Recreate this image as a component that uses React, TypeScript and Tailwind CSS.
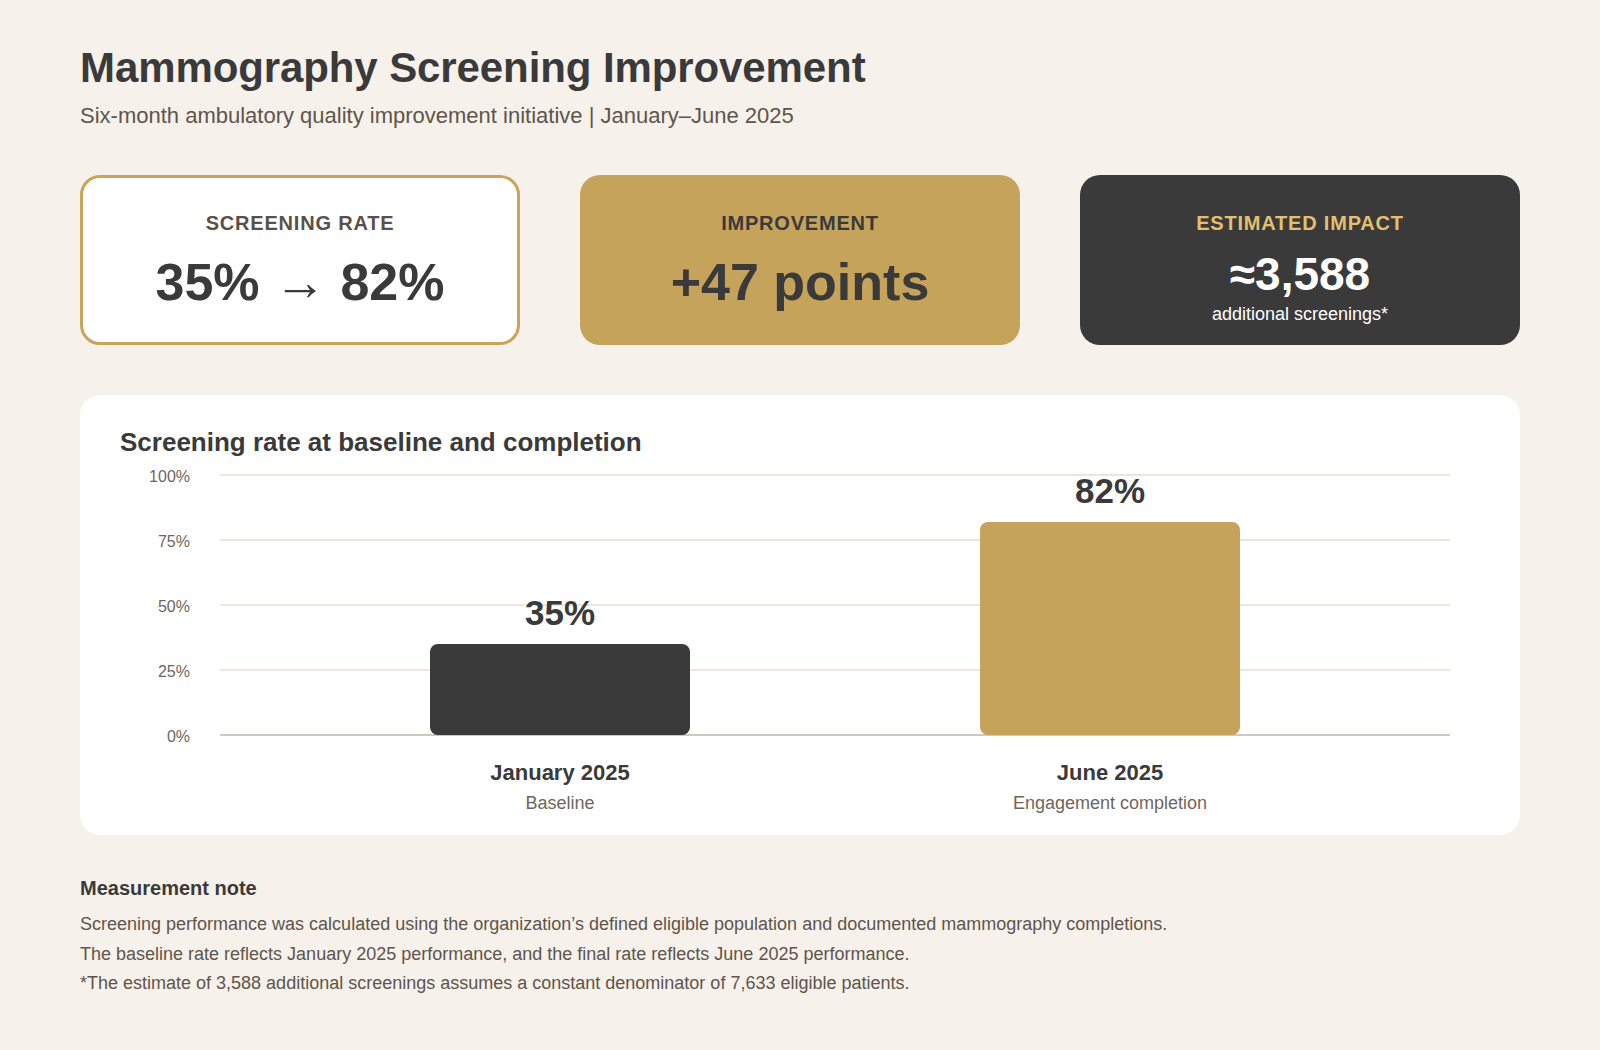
import React from "react";

const bars = [
  { value: 35, label: "January 2025", sub: "Baseline", color: "bg-[#3a3a3a]" },
  { value: 82, label: "June 2025", sub: "Engagement completion", color: "bg-[#c6a35a]" },
];

export default function App() {
  return (
    <div className="min-h-[1050px] w-full bg-[#f6f1ea] font-['Liberation_Sans',Arial,sans-serif] text-[#3a3a3a]">
      <div className="px-[80px] pt-[43px]">
        <h1 className="text-[42px] leading-[50px] font-bold tracking-[-0.1px] text-[#3a3a3a]">
          Mammography Screening Improvement
        </h1>
        <p className="mt-[8px] text-[22px] leading-[30px] text-[#5e554c]">
          Six-month ambulatory quality improvement initiative | January–June 2025
        </p>

        <div className="mt-[44px] flex gap-[60px]">
          <div className="flex h-[170px] w-[440px] flex-col items-center rounded-[20px] border-[3px] border-[#c9a55a] bg-white pt-[33px]">
            <div className="text-[20px] leading-[24px] font-bold tracking-[0.8px] text-[#5a5048]">SCREENING RATE</div>
            <div className="mt-[21px] text-[52px] leading-[52px] font-bold text-[#3a3a3a]">35% → 82%</div>
          </div>
          <div className="flex h-[170px] w-[440px] flex-col items-center rounded-[20px] bg-[#c6a35a] pt-[36px]">
            <div className="text-[20px] leading-[24px] font-bold tracking-[0.8px] text-[#3a3a3a]">IMPROVEMENT</div>
            <div className="mt-[21px] text-[52px] leading-[52px] font-bold text-[#3a3a3a]">+47 points</div>
          </div>
          <div className="flex h-[170px] w-[440px] flex-col items-center rounded-[20px] bg-[#3a3a3a] pt-[36px]">
            <div className="text-[20px] leading-[24px] font-bold tracking-[0.8px] text-[#e2c071]">ESTIMATED IMPACT</div>
            <div className="mt-[16px] text-[46px] leading-[46px] font-bold text-white">≈3,588</div>
            <div className="mt-[6px] text-[18px] leading-[22px] text-white">additional screenings*</div>
          </div>
        </div>

        <div className="mt-[50px] h-[440px] rounded-[20px] bg-white pl-[40px] pt-[31px]">
          <h2 className="text-[26px] leading-[32px] font-bold text-[#3a3a3a]">
            Screening rate at baseline and completion
          </h2>
          <div className="mt-[17px] flex">
            <div className="relative h-[260px] w-[70px] text-right text-[16px] leading-[16px] text-[#6e665e]">
              <div className="absolute right-0 top-[-6px]">100%</div>
              <div className="absolute right-0 top-[59px]">75%</div>
              <div className="absolute right-0 top-[124px]">50%</div>
              <div className="absolute right-0 top-[189px]">25%</div>
              <div className="absolute right-0 top-[254px]">0%</div>
            </div>
            <div className="relative ml-[30px] h-[260px] w-[1230px]">
              <div className="absolute left-0 right-0 top-[-1px] h-[2px] bg-[#ece6dd]" />
              <div className="absolute left-0 right-0 top-[64px] h-[2px] bg-[#ece6dd]" />
              <div className="absolute left-0 right-0 top-[129px] h-[2px] bg-[#ece6dd]" />
              <div className="absolute left-0 right-0 top-[194px] h-[2px] bg-[#ece6dd]" />
              <div className="absolute left-0 right-0 top-[259px] h-[2px] bg-[#d2c8bb]" />
              <div className="absolute inset-0 flex items-end justify-center gap-[290px]">
                {bars.map((b) => (
                  <div key={b.label} className="flex w-[260px] flex-col items-center">
                    <div className="mb-[14px] text-[35px] leading-[35px] font-bold text-[#3a3a3a]">{b.value}%</div>
                    <div
                      className={`w-[260px] rounded-[8px] ${b.color}`}
                      style={{ height: `${(b.value / 100) * 260}px` }}
                    />
                  </div>
                ))}
              </div>
            </div>
          </div>
          <div className="ml-[100px] mt-[25px] flex w-[1230px] justify-center gap-[290px]">
            {bars.map((b) => (
              <div key={b.label} className="flex w-[260px] flex-col items-center">
                <div className="text-[22px] leading-[26px] font-bold text-[#3a3a3a]">{b.label}</div>
                <div className="mt-[6px] text-[18px] leading-[22px] text-[#6e665e]">{b.sub}</div>
              </div>
            ))}
          </div>
        </div>

        <div className="mt-[41px]">
          <h3 className="text-[20px] leading-[24px] font-bold text-[#3a3a3a]">Measurement note</h3>
          <div className="mt-[10px] text-[18px] leading-[29.6px] text-[#5e554c]">
            <p>Screening performance was calculated using the organization’s defined eligible population and documented mammography completions.</p>
            <p>The baseline rate reflects January 2025 performance, and the final rate reflects June 2025 performance.</p>
            <p>*The estimate of 3,588 additional screenings assumes a constant denominator of 7,633 eligible patients.</p>
          </div>
        </div>
      </div>
    </div>
  );
}
